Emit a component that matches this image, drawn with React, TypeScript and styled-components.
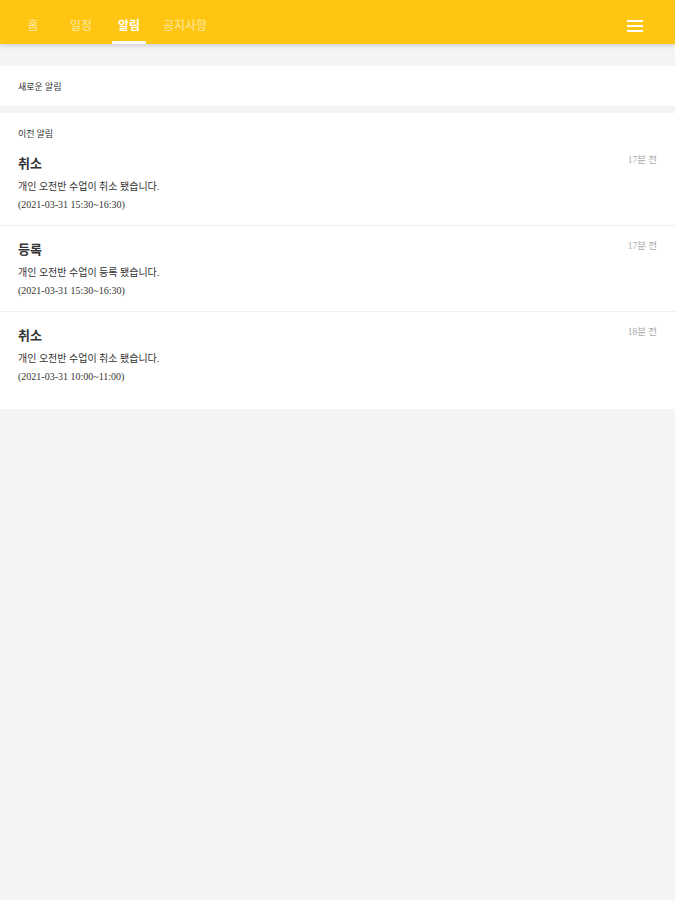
import styled, { createGlobalStyle } from 'styled-components';

const GlobalStyle = createGlobalStyle`
  html, body {
    margin: 0;
    padding: 0;
    background: #f5f4f5;
    font-family: "Noto Sans CJK KR", "Noto Sans", sans-serif;
  }
`;

const tabs = ['홈', '일정', '알림', '공지사항'];

const notices = [
  { title: '취소', body: '개인 오전반 수업이 취소 됐습니다.', time: '(2021-03-31 15:30~16:30)', ago: '17분 전' },
  { title: '등록', body: '개인 오전반 수업이 등록 됐습니다.', time: '(2021-03-31 15:30~16:30)', ago: '17분 전' },
  { title: '취소', body: '개인 오전반 수업이 취소 됐습니다.', time: '(2021-03-31 10:00~11:00)', ago: '18분 전' },
];

const App = () => {
  return (
    <Page>
      <GlobalStyle />
      <Header>
        <Tabs>
          {tabs.map((t) => (
            <Tab key={t} active={t === '알림'}>
              {t}
            </Tab>
          ))}
        </Tabs>
        <Menu aria-label="menu">
          <span />
          <span />
          <span />
        </Menu>
      </Header>
      <Content>
        <Card>
          <SectionLabel>새로운 알림</SectionLabel>
        </Card>
        <Card>
          <SectionLabel>이전 알림</SectionLabel>
          {notices.map((n, i) => (
            <Item key={i} last={i === notices.length - 1}>
              <ItemHead>
                <Title>{n.title}</Title>
                <Ago>{n.ago}</Ago>
              </ItemHead>
              <Line>{n.body}</Line>
              <Line>{n.time}</Line>
            </Item>
          ))}
        </Card>
      </Content>
    </Page>
  );
};

export default App;

const Page = styled.div`
  min-height: 900px;
  background: #f5f4f5;
`;

const Header = styled.header`
  height: 44px;
  background: #fec613;
  display: flex;
  align-items: center;
  justify-content: space-between;
  padding: 0 32px 0 9px;
  box-shadow: 0 2px 4px rgba(0, 0, 0, 0.14);
  position: relative;
`;

const Tabs = styled.nav`
  display: flex;
  height: 100%;
`;

const Tab = styled.div<{ active?: boolean }>`
  position: relative;
  display: flex;
  align-items: center;
  justify-content: center;
  min-width: 48px;
  box-sizing: border-box;
  padding: 5px 10px 0;
  height: 100%;
  font-size: 12px;
  font-weight: ${({ active }) => (active ? 700 : 400)};
  color: ${({ active }) => (active ? '#ffffff' : 'rgba(255, 255, 255, 0.62)')};
  ${({ active }) =>
    active &&
    `
    &::after {
      content: '';
      position: absolute;
      left: 7px;
      right: 7px;
      bottom: 0;
      height: 3px;
      background: #fff;
      border-radius: 1px;
    }
  `}
`;

const Menu = styled.div`
  display: flex;
  flex-direction: column;
  gap: 3px;
  width: 16px;
  margin-top: 8px;

  span {
    display: block;
    height: 2px;
    background: #fff;
  }
`;

const Content = styled.main`
  padding-top: 22px;
  display: flex;
  flex-direction: column;
  gap: 7px;
`;

const Card = styled.section`
  background: #fff;
  padding: 0 18px;
`;

const SectionLabel = styled.div`
  font-size: 9px;
  color: #333;
  height: 40px;
  display: flex;
  align-items: center;
`;

const Item = styled.div<{ last?: boolean }>`
  margin: 0 -18px;
  padding: 0 18px ${({ last }) => (last ? '23px' : '11px')};
  border-bottom: ${({ last }) => (last ? 'none' : '1px solid #f0eff0')};
  & + & {
    padding-top: 13px;
  }
`;

const ItemHead = styled.div`
  display: flex;
  justify-content: space-between;
  align-items: flex-start;
  margin-bottom: 5px;
`;

const Title = styled.div`
  font-size: 13px;
  font-weight: 700;
  color: #333;
  line-height: 20px;
`;

const Ago = styled.div`
  font-family: "Liberation Serif", "Noto Sans CJK KR", serif;
  font-size: 9.5px;
  color: #aaa;
  line-height: 14px;
`;

const Line = styled.div`
  font-family: "Liberation Serif", "Noto Sans CJK KR", serif;
  font-size: 10px;
  color: #333;
  line-height: 18px;
`;
